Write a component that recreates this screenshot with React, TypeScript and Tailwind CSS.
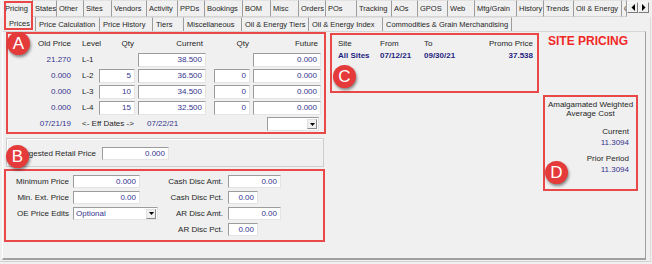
import React from 'react';

type Tab = { t: string; w: string; sel?: boolean };

const row1: Tab[] = [
  { t: 'Pricing', w: 'w-[32px]', sel: true },
  { t: 'States', w: 'w-[24px]' },
  { t: 'Other', w: 'w-[27px]' },
  { t: 'Sites', w: 'w-[28px]' },
  { t: 'Vendors', w: 'w-[35px]' },
  { t: 'Activity', w: 'w-[31px]' },
  { t: 'PPDs', w: 'w-[27px]' },
  { t: 'Bookings', w: 'w-[38px]' },
  { t: 'BOM', w: 'w-[28px]' },
  { t: 'Misc', w: 'w-[28px]' },
  { t: 'Orders', w: 'w-[27px]' },
  { t: 'POs', w: 'w-[31px]' },
  { t: 'Tracking', w: 'w-[35px]' },
  { t: 'AOs', w: 'w-[26px]' },
  { t: 'GPOS', w: 'w-[30px]' },
  { t: 'Web', w: 'w-[27px]' },
  { t: 'Mfg/Grain', w: 'w-[42px]' },
  { t: 'History', w: 'w-[27px]' },
  { t: 'Trends', w: 'w-[30px]' },
  { t: 'Oil & Energy', w: 'w-[48px]' },
  { t: 'O', w: 'w-[5px]' },
];

const row2: Tab[] = [
  { t: 'Prices', w: 'w-[32px]', sel: true },
  { t: 'Price Calculation', w: 'w-[64px]' },
  { t: 'Price History', w: 'w-[53px]' },
  { t: 'Tiers', w: 'w-[31px]' },
  { t: 'Miscellaneous', w: 'w-[58px]' },
  { t: 'Oil & Energy Tiers', w: 'w-[67px]' },
  { t: 'Oil & Energy Index', w: 'w-[74px]' },
  { t: 'Commodities & Grain Merchandising', w: 'w-[129px]' },
];

const V = 'text-[#34348f]';
const BOX = 'border-2 border-[#e84848]';

function Field({ w, v, h = 'h-[14px]' }: { w: string; v?: string; h?: string }) {
  return (
    <div
      className={`${w} ${h} shrink-0 bg-white border border-[#9c9c9c] border-r-[#e4e4e4] border-b-[#e4e4e4] flex items-center justify-end pr-[3px] ${V}`}
    >
      {v}
    </div>
  );
}

function Drop({ w, v, h }: { w: string; v?: string; h: string }) {
  return (
    <div
      className={`${w} ${h} shrink-0 bg-white border border-[#9c9c9c] border-r-[#e4e4e4] border-b-[#e4e4e4] flex items-center`}
    >
      <span className={`flex-1 pl-[2px] ${V}`}>{v}</span>
      <div className="w-[10px] mr-[1px] h-[10px] flex items-center justify-center bg-[#f0f0f0] border border-[#e0e0e0] border-r-[#8a8a8a] border-b-[#8a8a8a]">
        <svg width="5" height="3" viewBox="0 0 5 3">
          <path d="M0 0H5L2.5 3Z" fill="#000" />
        </svg>
      </div>
    </div>
  );
}

function Badge({ l, pos }: { l: string; pos: string }) {
  return (
    <div
      className={`absolute ${pos} w-[23px] h-[23px] rounded-full bg-[#e53a3a] shadow-[1px_2px_3px_rgba(0,0,0,0.45)] flex items-center justify-center text-white text-[17px] leading-none`}
    >
      {l}
    </div>
  );
}

function PriceRow({ old, lvl, q, cur, q2, fut }: { old: string; lvl: string; q?: string; cur: string; q2?: string; fut: string }) {
  return (
    <div className="flex h-[14px] items-center">
      <div className={`w-[64px] text-right pr-[1px] ${V}`}>{old}</div>
      <div className="w-[27px] pl-[10px]">{lvl}</div>
      {q !== undefined ? <Field w="w-[36px]" v={q} /> : <div className="w-[36px]" />}
      <div className="ml-[3px]">
        <Field w="w-[68px]" v={cur} />
      </div>
      <div className="ml-[8px]">
        {q2 !== undefined ? <Field w="w-[36px]" v={q2} /> : <div className="w-[36px]" />}
      </div>
      <div className="ml-[3px]">
        <Field w="w-[68px]" v={fut} />
      </div>
    </div>
  );
}

export default function App() {
  return (
    <div className="relative w-[652px] h-[264px] bg-[#f0f0f0] overflow-hidden font-['Liberation_Sans',Arial,sans-serif] text-[8px] leading-none text-[#262626] whitespace-nowrap">
      {/* outer tabs */}
      <div className="flex h-[17px] pl-[1px] text-[7.5px]">
        {row1.map((t) => (
          <div
            key={t.t + t.w}
            className={`${t.w} shrink-0 h-full flex items-center overflow-hidden border-r border-r-[#9c9c9c] ${
              t.sel ? 'pl-[3px] border-l border-l-white' : 'pl-[2px] border-b border-b-[#d4d4d4] border-t border-t-[#e2e2e2]'
            }`}
          >
            {t.t}
          </div>
        ))}
        <div className="flex ml-[0px] mt-[2px] h-[11px]">
          {['l', 'r'].map((d) => (
            <div
              key={d}
              className="w-[11px] h-[11px] flex items-center justify-center bg-[#f0f0f0] border border-[#fafafa] border-r-[#7c7c7c] border-b-[#7c7c7c]"
            >
              <svg width="4" height="7" viewBox="0 0 4 7">
                <path d={d === 'l' ? 'M4 0V7L0.5 3.5Z' : 'M0 0V7L3.5 3.5Z'} fill="#000" />
              </svg>
            </div>
          ))}
        </div>
      </div>

      {/* outer page */}
      <div className="w-[651px] h-[245px] border-r border-r-[#dcdcdc] border-b border-b-[#d0d0d0]">
        {/* inner tabs */}
        <div className="flex h-[14px] pl-[4px] text-[7.5px]">
          {row2.map((t) => (
            <div
              key={t.t}
              className={`${t.w} shrink-0 h-full flex items-center overflow-hidden border-r border-r-[#9c9c9c] ${
                t.sel ? 'justify-center' : 'pl-[3px] border-t border-t-[#e0e0e0]'
              }`}
            >
              {t.t}
            </div>
          ))}
        </div>

        {/* inner page */}
        <div className="ml-[2px] w-[644px] h-[229px] border-l border-l-white border-t border-t-[#d6d6d6] border-r border-r-[#a0a0a0] border-b-2 border-b-[#a0a0a0] flex">
          {/* left column */}
          <div className="flex flex-col w-[323px] shrink-0">
            {/* Box A */}
            <div className={`ml-[3px] w-[320px] h-[102px] ${BOX} pt-[3px] flex flex-col gap-[2px]`}>
              <div className="flex h-[14px] items-center">
                <div className="w-[64px] text-right pr-[1px]">Old Price</div>
                <div className="w-[27px] pl-[10px]">Level</div>
                <div className="w-[36px] text-right pr-[1px]">Qty</div>
                <div className="ml-[3px] w-[68px] text-right pr-[3px]">Current</div>
                <div className="ml-[8px] w-[36px] text-right pr-[1px]">Qty</div>
                <div className="ml-[3px] w-[68px] text-right pr-[3px]">Future</div>
              </div>
              <PriceRow old="21.270" lvl="L-1" cur="38.500" fut="0.000" />
              <PriceRow old="0.000" lvl="L-2" q="5" cur="36.500" q2="0" fut="0.000" />
              <PriceRow old="0.000" lvl="L-3" q="10" cur="34.500" q2="0" fut="0.000" />
              <PriceRow old="0.000" lvl="L-4" q="15" cur="32.500" q2="0" fut="0.000" />
              <div className="flex h-[14px] items-center">
                <div className={`w-[64px] text-right pr-[1px] ${V}`}>07/21/19</div>
                <div className="w-[75px] pl-[10px]">&lt;- Eff Dates -&gt;</div>
                <div className={`w-[120px] ${V}`}>07/22/21</div>
                <Drop w="w-[52px]" h="h-[14px]" />
              </div>
            </div>

            {/* Suggested retail group */}
            <div className="ml-[3px] mt-[4px] w-[318px] h-[29px] border border-[#cdcdcd] shadow-[inset_1px_1px_0_#ffffff] flex items-center pt-[2px]">
              <div className="w-[89px] text-right">Suggested Retail Price</div>
              <div className="ml-[6px]">
                <Field w="w-[67px]" h="h-[13px]" v="0.000" />
              </div>
            </div>

            {/* Box B */}
            <div className={`ml-[1px] mt-[2px] w-[321px] h-[73px] ${BOX} pt-[4px] flex`}>
              <div className="w-[152px] flex flex-col gap-[3px]">
                <div className="flex items-center h-[13px]">
                  <div className="w-[64px] text-right pr-[1px]">Minimum Price</div>
                  <div className="ml-[3px]">
                    <Field w="w-[67px]" h="h-[13px]" v="0.000" />
                  </div>
                </div>
                <div className="flex items-center h-[13px]">
                  <div className="w-[64px] text-right pr-[1px]">Min. Ext. Price</div>
                  <div className="ml-[3px]">
                    <Field w="w-[67px]" h="h-[13px]" v="0.00" />
                  </div>
                </div>
                <div className="flex items-center h-[13px]">
                  <div className="w-[64px] text-right pr-[1px]">OE Price Edits</div>
                  <div className="ml-[3px]">
                    <Drop w="w-[85px]" h="h-[13px]" v="Optional" />
                  </div>
                </div>
              </div>
              <div className="flex flex-col gap-[3px]">
                <div className="flex items-center h-[13px]">
                  <div className="w-[65px] text-right">Cash Disc Amt.</div>
                  <div className="ml-[5px]">
                    <Field w="w-[53px]" h="h-[13px]" v="0.00" />
                  </div>
                </div>
                <div className="flex items-center h-[13px]">
                  <div className="w-[65px] text-right">Cash Disc Pct.</div>
                  <div className="ml-[5px]">
                    <Field w="w-[30px]" h="h-[13px]" v="0.00" />
                  </div>
                </div>
                <div className="flex items-center h-[13px]">
                  <div className="w-[65px] text-right">AR Disc Amt.</div>
                  <div className="ml-[5px]">
                    <Field w="w-[53px]" h="h-[13px]" v="0.00" />
                  </div>
                </div>
                <div className="flex items-center h-[13px]">
                  <div className="w-[65px] text-right">AR Disc Pct.</div>
                  <div className="ml-[5px]">
                    <Field w="w-[30px]" h="h-[13px]" v="0.00" />
                  </div>
                </div>
              </div>
            </div>
          </div>

          {/* Box C */}
          <div className={`ml-[4px] mt-[1px] w-[209px] h-[60px] shrink-0 ${BOX} pt-[3px] pl-[6px] pr-[4px]`}>
            <div className="flex h-[12px] items-center">
              <div className="w-[42px]">Site</div>
              <div className="w-[44px]">From</div>
              <div className="flex-1">To</div>
              <div>Promo Price</div>
            </div>
            <div className="flex h-[12px] items-center font-bold text-[#1f1f80]">
              <div className="w-[42px]">All Sites</div>
              <div className="w-[44px]">07/12/21</div>
              <div className="flex-1">09/30/21</div>
              <div>37.538</div>
            </div>
          </div>

          {/* Right column */}
          <div className="ml-[4px] flex flex-col">
            <div className="mt-[2px] pl-[5px] h-[14px] leading-[14px] text-[12px] font-bold text-[#f02828]">SITE PRICING</div>
            <div className={`mt-[47px] w-[95px] h-[96px] ${BOX} pt-[3px] flex flex-col`}>
              <div className="text-center leading-[9px]">Amalgamated Weighted</div>
              <div className="text-center leading-[9px]">Average Cost</div>
              <div className="mt-[8px] leading-[11px] text-right pr-[7px]">Current</div>
              <div className={`leading-[11px] text-right pr-[7px] ${V}`}>11.3094</div>
              <div className="mt-[5px] leading-[11px] text-right pr-[7px]">Prior Period</div>
              <div className={`leading-[11px] text-right pr-[7px] ${V}`}>11.3094</div>
            </div>
          </div>
        </div>
      </div>

      {/* annotation overlays */}
      <div className="absolute left-[4px] top-[1px] w-[29px] h-[29px] border-2 border-[#e84848]" />
      <Badge l="A" pos="left-[7px] top-[32px]" />
      <Badge l="B" pos="left-[6px] top-[145px]" />
      <Badge l="C" pos="left-[333px] top-[65px]" />
      <Badge l="D" pos="left-[545px] top-[161px]" />
    </div>
  );
}
